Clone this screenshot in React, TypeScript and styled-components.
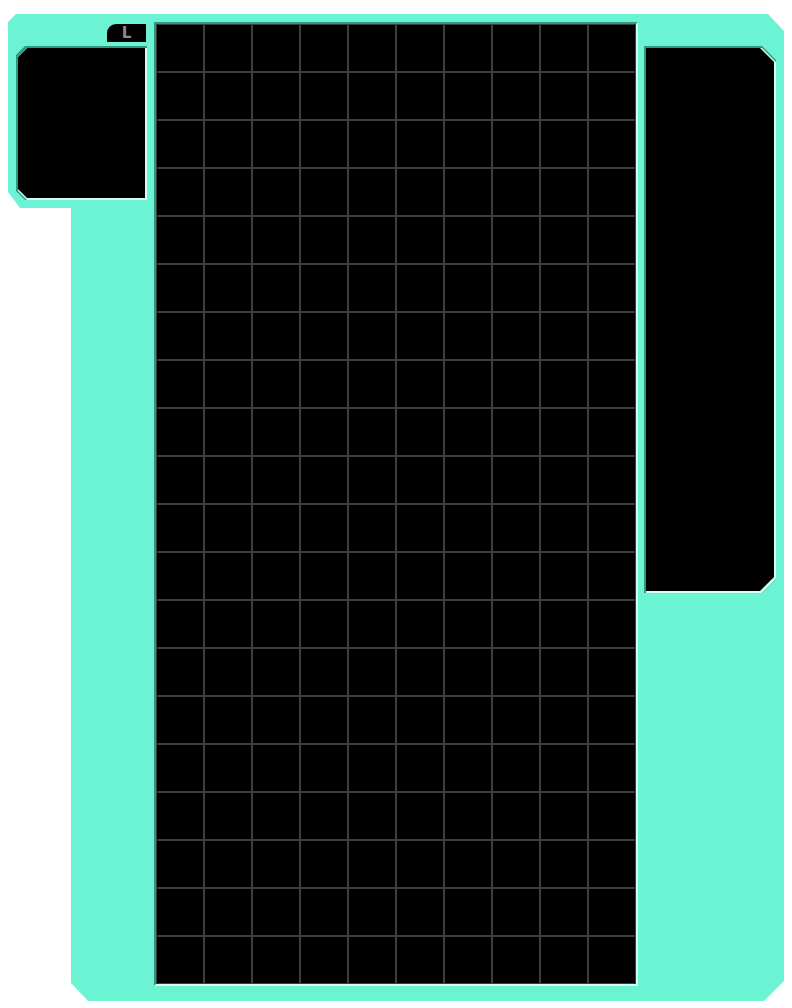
import { ReactElement } from 'react'
import styled, { createGlobalStyle } from 'styled-components'

const COLOR = {
  teal: '#6cf3d3',
  dark: '#2b9a80',
  light: '#d2fff2',
  grid: '#3d3d3d',
  key: '#8c8c8c',
}

const COLS = 10
const ROWS = 20

const GlobalStyle = createGlobalStyle`
  body {
    margin: 8px;
    background: #ffffff;
    font-family: 'DejaVu Sans', sans-serif;
  }
`

const StyledShell = styled.div`
  margin-top: 6px;
  width: 776px;
  height: 987px;
  box-sizing: border-box;
  padding: 8px 8px 15px 8px;
  display: flex;
  align-items: flex-start;
  background: ${COLOR.teal};
  clip-path: polygon(
    0 8px,
    8px 0,
    760px 0,
    776px 17px,
    776px 967px,
    756px 987px,
    80px 987px,
    63px 969px,
    63px 194px,
    12px 194px,
    0 178px
  );
`

const StyledSide = styled.div<{ $width: number }>`
  width: ${(p): number => p.$width}px;
  display: flex;
  flex-direction: column;
  align-items: flex-end;
`

const StyledKeyTab = styled.div`
  width: 39px;
  height: 18px;
  margin: 2px 1px 0 0;
  background: #000;
  border-top-left-radius: 9px;
  display: flex;
  align-items: center;
  justify-content: center;
  color: ${COLOR.key};
  font-size: 15px;
  font-weight: bold;
  line-height: 1;
  padding-top: 1px;
  box-sizing: border-box;
`

const chamfer = (left: number, right: number): string =>
  `polygon(
    ${left}px 0,
    calc(100% - ${right}px) 0,
    100% ${right}px,
    100% calc(100% - ${right}px),
    calc(100% - ${right}px) 100%,
    ${left}px 100%,
    0 calc(100% - ${left}px),
    0 ${left}px
  )`

const StyledBevel = styled.div<{ $h: number; $l: number; $r: number; $mt: number }>`
  width: 100%;
  height: ${(p): number => p.$h}px;
  margin-top: ${(p): number => p.$mt}px;
  box-sizing: border-box;
  padding: 2px 0 0 2px;
  background: ${COLOR.dark};
  clip-path: ${(p): string => chamfer(p.$l, p.$r)};
  display: flex;
`

const StyledBevelLight = styled.div<{ $l: number; $r: number }>`
  flex: 1;
  display: flex;
  padding: 0 2px 2px 0;
  background: ${COLOR.light};
  clip-path: ${(p): string => chamfer(p.$l, p.$r)};
`

const StyledBevelCore = styled.div<{ $l: number; $r: number }>`
  flex: 1;
  background: #000;
  clip-path: ${(p): string => chamfer(p.$l, p.$r)};
`

const StyledBoard = styled.div`
  margin: 0 6px 0 7px;
  border-style: solid;
  border-width: 2px;
  border-color: ${COLOR.dark} ${COLOR.light} ${COLOR.light} ${COLOR.dark};
  background: #000;
  display: grid;
  grid-template-columns: repeat(${COLS}, 48px);
  grid-template-rows: repeat(${ROWS}, 48px);
`

const StyledCell = styled.div`
  box-sizing: border-box;
  border: 1px solid ${COLOR.grid};
`

const Panel = ({
  height,
  left,
  right,
  top,
}: {
  height: number
  left: number
  right: number
  top: number
}): ReactElement => (
  <StyledBevel $h={height} $l={left} $r={right} $mt={top}>
    <StyledBevelLight $l={left} $r={right}>
      <StyledBevelCore $l={left} $r={right} />
    </StyledBevelLight>
  </StyledBevel>
)

const App = (): ReactElement => {
  return (
    <>
      <GlobalStyle />
      <StyledShell>
        <StyledSide $width={131}>
          <StyledKeyTab>L</StyledKeyTab>
          <Panel height={154} left={9} right={0} top={4} />
        </StyledSide>
        <StyledBoard>
          {Array.from({ length: COLS * ROWS }, (_, i) => (
            <StyledCell key={i} />
          ))}
        </StyledBoard>
        <StyledSide $width={132}>
          <Panel height={547} left={0} right={14} top={24} />
        </StyledSide>
      </StyledShell>
    </>
  )
}

export default App
